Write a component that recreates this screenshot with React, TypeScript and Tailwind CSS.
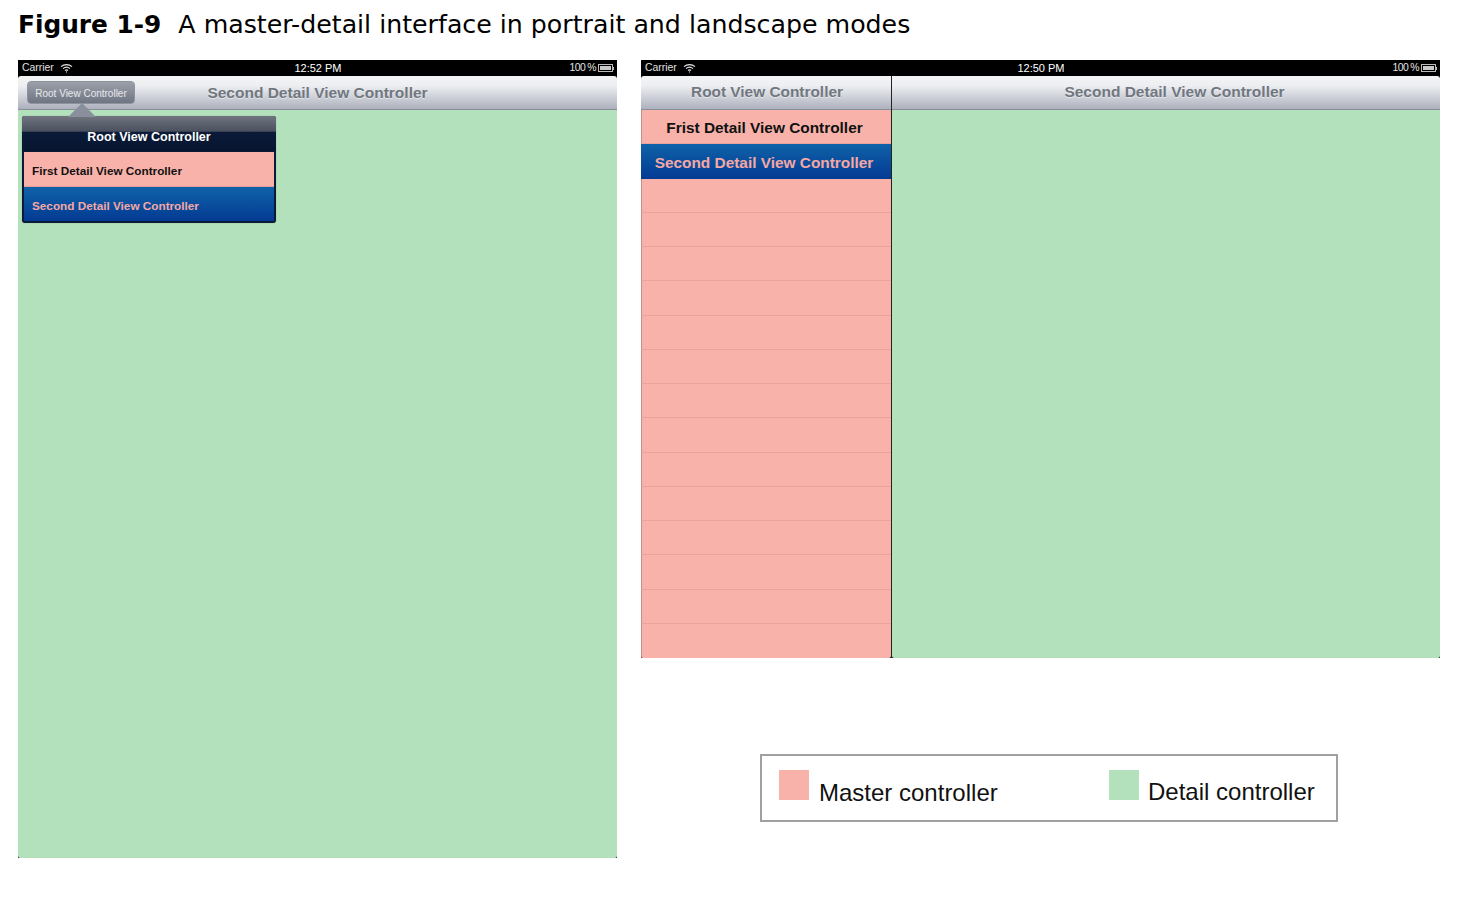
const sans = "font-['Liberation_Sans',Arial,sans-serif]";
const navBg = "bg-[linear-gradient(#f3f4f6,#eceef1_30%,#adb1bd)]";
const selBg = "bg-[linear-gradient(#0f62a8,#033a93)]";

function Wifi() {
  return (
    <svg width="13" height="10" viewBox="0 0 13 10" fill="none" stroke="#e5e5e5" strokeWidth="1.2" className="block">
      <path d="M1 3.6C4 .9 9 .9 12 3.6" />
      <path d="M3 5.6C5 3.9 8 3.9 10 5.6" />
      <path d="M5 7.5C5.9 6.8 7.1 6.8 8 7.5" />
      <circle cx="6.5" cy="8.9" r=".6" fill="#e5e5e5" stroke="none" />
    </svg>
  );
}

function Battery() {
  return (
    <span className="flex items-center">
      <span className="block w-[15px] h-[8px] border border-[#bbb] p-px">
        <span className="block w-full h-full bg-[#c9c9c9]" />
      </span>
      <span className="block w-px h-[3px] bg-[#bbb]" />
    </span>
  );
}

function StatusBar({ time }: { time: string }) {
  return (
    <div className={`h-4 shrink-0 bg-black text-[#e2e2e2] text-[10.4px] leading-4 pl-[4px] pr-[3px] grid grid-cols-[1fr_auto_1fr] items-center ${sans}`}>
      <div className="flex items-center gap-[6px]">
        <span>Carrier</span>
        <Wifi />
      </div>
      <span className="text-[11px] text-white">{time}</span>
      <div className="flex items-center justify-end gap-[2px] tracking-[-0.6px]">
        <span>100 %</span>
        <Battery />
      </div>
    </div>
  );
}

function Popover() {
  return (
    <div className={`absolute left-[4px] top-[56px] w-[254px] ${sans}`}>
      <div className="absolute left-[46px] -top-[13px] w-0 h-0 border-l-[14px] border-r-[14px] border-b-[14px] border-l-transparent border-r-transparent border-b-[#8a8f9c]" />
      <div className="rounded-[3px] bg-[#0b1a36] p-[2px] pt-0 shadow-[0_0_1px_#0006]">
        <div className="h-[35px] -mx-[2px] rounded-t-[3px] flex items-end justify-center pb-[6px] bg-[linear-gradient(#70757f,#4a505f_44%,#0a1a38_45%,#071530)] text-white text-[12.5px] leading-[16px] font-bold">
          Root View Controller
        </div>
        <div className="h-[35px] mt-px pt-[3px] bg-[#f8b2aa] border-b border-[#e49c96] flex items-center pl-[8px] text-[11.75px] font-bold text-[#111]">
          First Detail View Controller
        </div>
        <div className={`h-[34px] pt-[3px] ${selBg} flex items-center pl-[8px] text-[11.75px] font-bold text-[#f4a8a4]`}>
          Second Detail View Controller
        </div>
      </div>
    </div>
  );
}

function Portrait() {
  return (
    <div className="relative w-[599px] h-[798px] flex flex-col bg-black shrink-0">
      <StatusBar time="12:52 PM" />
      <div className={`h-[34px] shrink-0 rounded-t-[3px] ${navBg} border-b border-[#8a8e99] relative flex items-center justify-center pt-px ${sans}`}>
        <span className="text-[15.5px] font-bold text-[#71777f] [text-shadow:0_1px_0_#ffffff80]">Second Detail View Controller</span>
        <div className="absolute left-[9px] top-[5px] w-[108px] h-[23px] pt-px rounded-[4px] border border-[#8d929c] bg-[linear-gradient(#9ba0aa,#6f7582)] flex items-center justify-center text-[10px] text-[#e8e9ec] whitespace-nowrap">
          Root View Controller
        </div>
      </div>
      <div className="flex-1 bg-[#b3e1bb] rounded-b-[2px]" />
      <Popover />
    </div>
  );
}

function Landscape() {
  const empties = Array.from({ length: 14 }, (_, i) => i);
  return (
    <div className={`w-[799px] h-[598px] flex flex-col bg-black ${sans}`}>
      <StatusBar time="12:50 PM" />
      <div className="flex-1 flex min-h-0">
        <div className="w-[250px] shrink-0 flex flex-col">
          <div className={`h-[34px] shrink-0 rounded-tl-[3px] ${navBg} border-b border-[#8a8e99] flex items-center justify-center pl-[2px] pb-px text-[15.4px] font-bold text-[#71777f] [text-shadow:0_1px_0_#ffffff80]`}>
            Root View Controller
          </div>
          <div className="flex-1 flex flex-col bg-[#f8b2aa] rounded-b-[2px] overflow-hidden">
            <div className="h-[34.25px] shrink-0 flex items-center justify-center pr-[4px] pt-[2px] text-[15.4px] font-bold text-[#111] border-b border-b-[#eba49c] border-l border-l-[#c99088]">
              Frist Detail View Controller
            </div>
            <div className={`h-[34.25px] shrink-0 flex items-center justify-center pr-[4px] pt-[2px] text-[15.4px] font-bold text-[#f4a8a4] ${selBg}`}>
              Second Detail View Controller
            </div>
            {empties.map((i) => (
              <div key={i} className="h-[34.25px] shrink-0 border-b border-b-[#eba49c] border-l border-l-[#c99088] last:border-b-0" />
            ))}
          </div>
        </div>
        <div className="w-px bg-[#222] shrink-0" />
        <div className="flex-1 flex flex-col min-w-0">
          <div className={`h-[34px] shrink-0 rounded-tr-[3px] ${navBg} border-b border-[#8a8e99] flex items-center justify-center pl-[17px] pb-px text-[15.5px] font-bold text-[#71777f] [text-shadow:0_1px_0_#ffffff80]`}>
            Second Detail View Controller
          </div>
          <div className="flex-1 bg-[#b3e1bb] rounded-b-[2px]" />
        </div>
      </div>
    </div>
  );
}

function Legend() {
  return (
    <div className={`ml-[119px] mt-[96px] w-[578px] h-[68px] border-2 border-[#a0a0a0] flex text-[24px] text-[#111] ${sans}`}>
      <div className="w-[347px] pl-[17px] pt-[14px] flex items-start gap-[10px]">
        <span className="block w-[30px] h-[30px] bg-[#f8b2aa]" />
        <span className="leading-[30px] mt-[8px]">Master controller</span>
      </div>
      <div className="pt-[14px] flex items-start gap-[9px]">
        <span className="block w-[30px] h-[30px] bg-[#b3e1bb]" />
        <span className="leading-[30px] mt-[7px]">Detail controller</span>
      </div>
    </div>
  );
}

export default function App() {
  return (
    <div className="w-[1460px] h-[902px] overflow-hidden bg-white pl-[18px]">
      <div className="h-[60px] pt-[8px] leading-[34px] text-black font-['DejaVu_Sans',sans-serif] whitespace-nowrap">
        <span className="font-bold text-[24.8px]">Figure 1-9</span>
        <span className="ml-[17px] text-[25.25px]">A master-detail interface in portrait and landscape modes</span>
      </div>
      <div className="flex gap-[24px] items-start">
        <Portrait />
        <div className="flex flex-col">
          <Landscape />
          <Legend />
        </div>
      </div>
    </div>
  );
}
